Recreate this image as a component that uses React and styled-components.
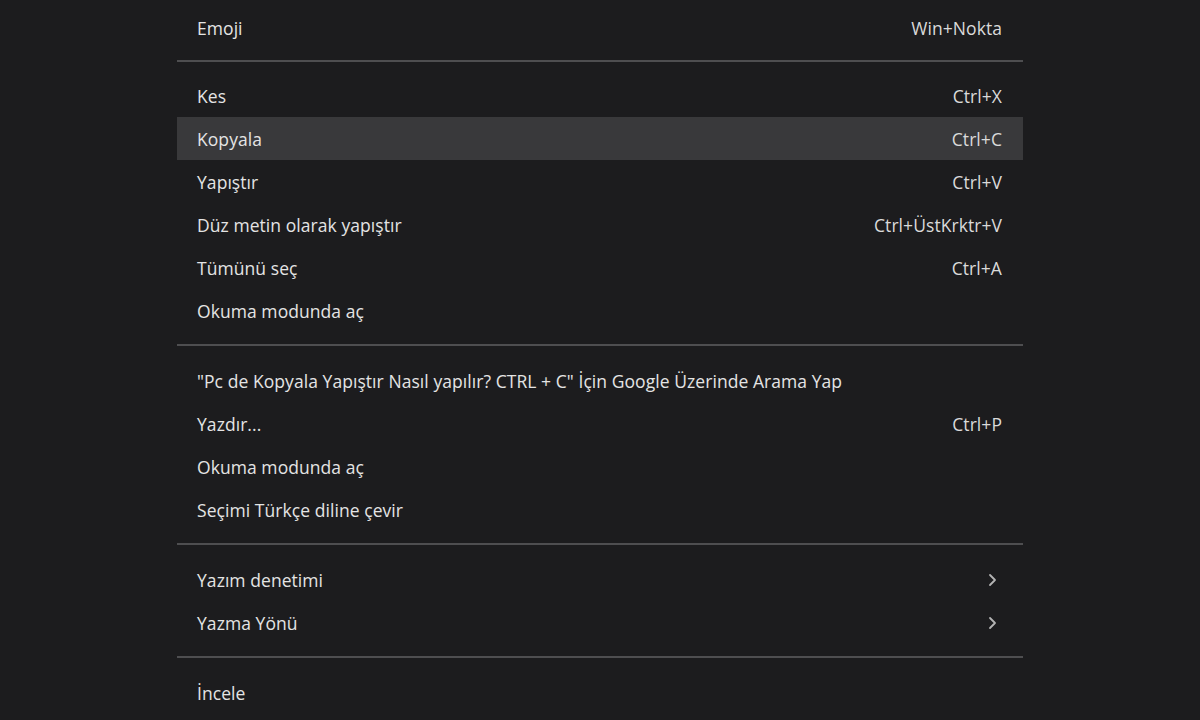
import React from "react";
import styled, { createGlobalStyle } from "styled-components";

const GlobalStyle = createGlobalStyle`
  html, body {
    margin: 0;
    padding: 0;
    background: #1c1c1e;
  }
  body {
    font-family: "Open Sans", "Noto Sans", "Liberation Sans", sans-serif;
  }
`;

// menü içeriği
const groups = [
  [{ label: "Emoji", shortcut: "Win+Nokta" }],
  [
    { label: "Kes", shortcut: "Ctrl+X" },
    { label: "Kopyala", shortcut: "Ctrl+C", active: true },
    { label: "Yapıştır", shortcut: "Ctrl+V" },
    { label: "Düz metin olarak yapıştır", shortcut: "Ctrl+ÜstKrktr+V" },
    { label: "Tümünü seç", shortcut: "Ctrl+A" },
    { label: "Okuma modunda aç" },
  ],
  [
    {
      label:
        "\"Pc de Kopyala Yapıştır Nasıl yapılır? CTRL + C\" İçin Google Üzerinde Arama Yap",
    },
    { label: "Yazdır...", shortcut: "Ctrl+P" },
    { label: "Okuma modunda aç" },
    { label: "Seçimi Türkçe diline çevir" },
  ],
  [
    { label: "Yazım denetimi", sub: true },
    { label: "Yazma Yönü", sub: true },
  ],
  [{ label: "İncele" }],
];

const Chevron = () => (
  <Arrow width="10" height="14" viewBox="0 0 10 14" fill="none">
    <path
      d="M3 2l5 5-5 5"
      stroke="#b4b4b4"
      strokeWidth="1.8"
      strokeLinecap="round"
      strokeLinejoin="round"
    />
  </Arrow>
);

const App = () => {
  return (
    <React.Fragment>
      <GlobalStyle />
      <Page>
        <Menu>
          {groups.map((group, gi) => (
            <React.Fragment key={gi}>
              {gi > 0 && <Separator $tight={gi === 1} />}
              {group.map((item, i) => (
                <Item key={i} $active={item.active}>
                  <Label>{item.label}</Label>
                  {item.shortcut && <Shortcut>{item.shortcut}</Shortcut>}
                  {item.sub && <Chevron />}
                </Item>
              ))}
            </React.Fragment>
          ))}
        </Menu>
      </Page>
    </React.Fragment>
  );
};

const Page = styled.div`
  width: 100%;
  height: 720px;
  overflow: hidden;
  display: flex;
  justify-content: center;
  background: #1c1c1e;
`;

const Menu = styled.div`
  width: 846px;
  padding-top: 6px;
  display: flex;
  flex-direction: column;
`;

const Item = styled.div`
  flex: none;
  height: 43px;
  padding: 0 21px 0 20px;
  display: flex;
  align-items: center;
  justify-content: space-between;
  background: ${(p) => (p.$active ? "#39393b" : "transparent")};
  color: #e4e4e4;
  font-size: 17.5px;
  letter-spacing: 0.06px;
  cursor: default;
`;

const Label = styled.span`
  white-space: nowrap;
`;

const Shortcut = styled.span`
  white-space: nowrap;
  color: #dadada;
`;

const Arrow = styled.svg`
  margin-right: 5px;
`;

const Separator = styled.div`
  flex: none;
  height: 2px;
  margin: ${(p) => (p.$tight ? "11px 0 12px" : "12px 0 13px")};
  background: #4e4e50;
`;

export default App;
